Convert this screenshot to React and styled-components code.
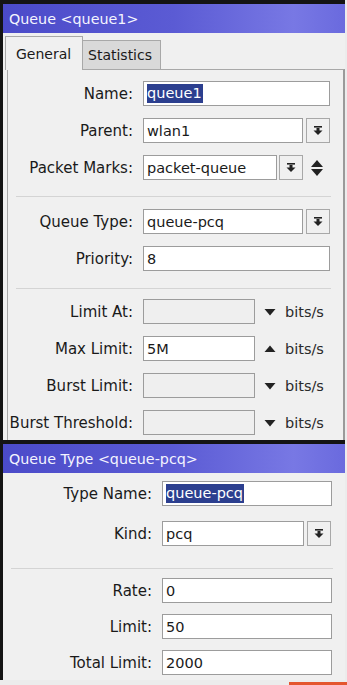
import styled, { createGlobalStyle } from "styled-components";

const Global = createGlobalStyle`
    html, body {
        margin: 0;
        padding: 0;
        background: #ececec;
    }
    body {
        font-family: "DejaVu Sans", "Liberation Sans", sans-serif;
        font-size: 15px;
        color: #1a1a1a;
    }
`;

const DropIcon = () => (
    <svg width="10" height="11" viewBox="0 0 10 11">
        <rect x="1" y="1" width="8" height="1.6" fill="#222" />
        <rect x="3.5" y="3" width="3" height="3" fill="#222" />
        <polygon points="0.5,5.5 9.5,5.5 5,10" fill="#222" />
    </svg>
);

const SpinIcon = () => (
    <svg width="14" height="18" viewBox="0 0 14 18">
        <polygon points="7,1 13,8 1,8" fill="#222" />
        <polygon points="1,10 13,10 7,17" fill="#222" />
    </svg>
);

const Arrow = ({ up }) => (
    <svg width="12" height="8" viewBox="0 0 12 8">
        {up
            ? <polygon points="6,0.5 11.5,7 0.5,7" fill="#222" />
            : <polygon points="0.5,1 11.5,1 6,7.5" fill="#222" />}
    </svg>
);

const Field = ({ label, value, selected, disabled, width, drop, spin, unit, up, labelWidth, top }) => (
    <Row $top={top}>
        <Label $w={labelWidth}>{label}</Label>
        <Input $w={width} $disabled={disabled}>
            {selected ? <Sel>{value}</Sel> : value}
        </Input>
        {drop && <DropBtn $ml={drop}><DropIcon /></DropBtn>}
        {spin && <Spin><SpinIcon /></Spin>}
        {unit && (
            <Unit>
                <Arrow up={up} />
                <span>bits/s</span>
            </Unit>
        )}
    </Row>
);

export default function App() {
    return (
        <>
            <Global />
            <Page>
                <Window>
                    <Title>Queue &lt;queue1&gt;</Title>
                    <Tabs>
                        <Tab $active>General</Tab>
                        <Tab>Statistics</Tab>
                    </Tabs>
                    <Panel>
                        <Field label="Name:" value="queue1" selected width={187} />
                        <Field label="Parent:" value="wlan1" width={160} drop={3} />
                        <Field label="Packet Marks:" value="packet-queue" width={134} drop={2} spin />
                        <Divider />
                        <Field label="Queue Type:" value="queue-pcq" width={160} drop={3} />
                        <Field label="Priority:" value="8" width={187} />
                        <Divider $after={10} $before={17} />
                        <Field label="Limit At:" value="" disabled width={112} unit />
                        <Field label="Max Limit:" value="5M" width={112} unit up />
                        <Field label="Burst Limit:" value="" disabled width={112} unit />
                        <Field label="Burst Threshold:" value="" disabled width={112} unit />
                    </Panel>
                </Window>
                <Window $second>
                    <Title>Queue Type &lt;queue-pcq&gt;</Title>
                    <Body>
                        <Field label="Type Name:" value="queue-pcq" selected width={170} labelWidth={149} />
                        <Field label="Kind:" value="pcq" width={142} drop={3} labelWidth={149} top={4} />
                        <Divider $before={23} $after={10} />
                        <Field label="Rate:" value="0" width={170} labelWidth={149} />
                        <Field label="Limit:" value="50" width={170} labelWidth={149} />
                        <Field label="Total Limit:" value="2000" width={170} labelWidth={149} />
                    </Body>
                </Window>
                <Footer>
                    <RedBar />
                </Footer>
            </Page>
        </>
    );
}

const Page = styled.div`
    width: 347px;
    height: 685px;
    overflow: hidden;
    display: flex;
    flex-direction: column;
    background: #ececec;
`;

const Window = styled.div`
    width: 342px;
    border-left: 3px solid #141414;
    border-top: 4px solid #141414;
    background: #f0f0f0;
    height: ${(p) => (p.$second ? "236px" : "436px")};
    display: flex;
    flex-direction: column;
    box-sizing: content-box;
`;

const Title = styled.div`
    height: 29px;
    display: flex;
    align-items: center;
    padding-left: 6px;
    color: #f4f4ff;
    font-size: 14.3px;
    background: linear-gradient(90deg, #4b4bc9 0%, #5b5bd4 50%, #7878e4 85%, #6a6ade 100%);
`;

const Tabs = styled.div`
    display: flex;
    align-items: flex-end;
    height: 37px;
    padding-left: 2px;
    font-size: 14px;
`;

const Tab = styled.div`
    height: ${(p) => (p.$active ? "34px" : "30px")};
    padding: 0 ${(p) => (p.$active ? "10px" : "5px")};
    display: flex;
    align-items: center;
    box-sizing: border-box;
    background: ${(p) => (p.$active ? "#f0f0f0" : "#d9d9d9")};
    border: 1px solid #a8a8a8;
    border-bottom: ${(p) => (p.$active ? "none" : "1px solid #a8a8a8")};
    margin-left: ${(p) => (p.$active ? "0" : "-1px")};
    position: relative;
    z-index: ${(p) => (p.$active ? 1 : 0)};
    width: ${(p) => (p.$active ? "78px" : "79px")};
`;

const Panel = styled.div`
    flex: 1;
    margin-left: 4px;
    border-left: 1px solid #a8a8a8;
    border-top: 1px solid #a8a8a8;
    border-right: 2px solid #9a9a9a;
    margin-top: -1px;
    padding-top: 11px;
    display: flex;
    flex-direction: column;
    gap: 12px;
`;

const Body = styled.div`
    flex: 1;
    padding-top: 8px;
    display: flex;
    flex-direction: column;
    gap: 11px;
`;

const Row = styled.div`
    display: flex;
    align-items: center;
    height: 25px;
    flex-shrink: 0;
    margin-top: ${(p) => p.$top || 0}px;
`;

const Label = styled.div`
    width: ${(p) => p.$w || 125}px;
    text-align: right;
    padding-right: 10px;
    box-sizing: content-box;
    flex-shrink: 0;
    white-space: nowrap;
`;

const Input = styled.div`
    width: ${(p) => p.$w}px;
    height: 25px;
    box-sizing: border-box;
    border: 1px solid #9c9c9c;
    background: ${(p) => (p.$disabled ? "#efefef" : "#ffffff")};
    display: flex;
    align-items: center;
    padding-left: 3px;
    flex-shrink: 0;
    font-size: 14.5px;
`;

const Sel = styled.span`
    background: #2c3f8f;
    color: #ffffff;
    line-height: 19px;
    padding-right: 1px;
`;

const DropBtn = styled.div`
    margin-left: ${(p) => p.$ml}px;
    width: 24px;
    height: 25px;
    box-sizing: border-box;
    border: 1px solid #a8a8a8;
    display: flex;
    align-items: center;
    justify-content: center;
    flex-shrink: 0;
`;

const Spin = styled.div`
    margin-left: 7px;
    display: flex;
    align-items: center;
`;

const Unit = styled.div`
    display: flex;
    align-items: center;
    margin-left: 9px;
    gap: 9px;
    span {
        color: #2a2a2a;
        font-size: 14.5px;
    }
`;

const Divider = styled.div`
    height: 1px;
    flex-shrink: 0;
    background: #d4d4d4;
    margin-left: 8px;
    margin-right: 12px;
    margin-top: ${(p) => (p.$before ?? 16) - 12}px;
    margin-bottom: ${(p) => (p.$after ?? 12) - 12}px;
`;

const Footer = styled.div`
    flex: 1;
    display: flex;
    justify-content: flex-end;
    align-items: flex-end;
`;

const RedBar = styled.div`
    width: 58px;
    height: 3px;
    background: #e4552e;
`;
